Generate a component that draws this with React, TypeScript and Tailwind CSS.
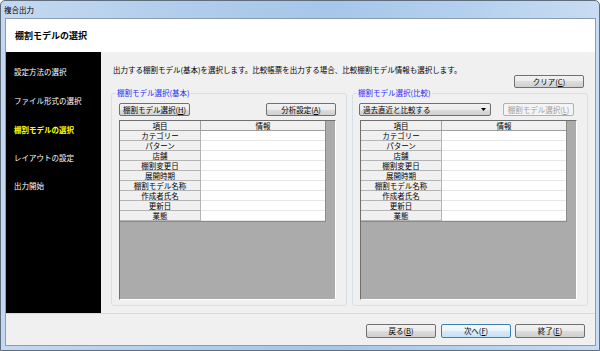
import React from "react";

const FONT = "[font-family:'Noto_Sans_CJK_JP','Noto_Sans',sans-serif]";

type BtnProps = {
  children: React.ReactNode;
  className?: string;
  focus?: boolean;
  disabled?: boolean;
};

function Btn({ children, className = "", focus, disabled }: BtnProps) {
  const look = disabled
    ? "border-[#adb2b5] bg-[#f4f4f4] text-[#a0a0a0]"
    : focus
    ? "border-[#3c7fb1] bg-[linear-gradient(#f5fafe,#e9f4fc_50%,#d6ebf9_50%,#c6e2f6)] text-black"
    : "border-[#707070] bg-[linear-gradient(#f2f2f2,#ebebeb_50%,#dddddd_50%,#cfcfcf)] text-black";
  return (
    <div
      className={`flex items-center justify-center rounded-[2px] border text-[7.5px] leading-none ${look} ${className}`}
    >
      {children}
    </div>
  );
}

const rows = [
  "カテゴリー",
  "パターン",
  "店舗",
  "棚割変更日",
  "展開時期",
  "棚割モデル名称",
  "作成者氏名",
  "更新日",
  "業態",
];

function Grid() {
  return (
    <div className="mt-[4px] h-[180px] w-[217px] border-t border-l border-[#6f6f6f] border-b-white border-r-white border-b border-r bg-[#ababab]">
      <div className="w-[206px] border-r border-b border-[#8a8a8a]">
        <div className="flex h-[10px] text-[7.5px] leading-[10px] text-black">
          <div className="w-[81px] border-r border-b border-[#a0a0a0] bg-[#f0f0f0] text-center">項目</div>
          <div className="flex-1 border-b border-[#a0a0a0] bg-[#f0f0f0] text-center">情報</div>
        </div>
        {rows.map((r) => (
          <div key={r} className="flex h-[10px] text-[7.5px] leading-[10px] text-black">
            <div className="w-[81px] border-r border-b border-[#b4b4b4] bg-[#f0f0f0] text-center">{r}</div>
            <div className="flex-1 border-b border-[#e6e6e6] bg-white" />
          </div>
        ))}
      </div>
    </div>
  );
}

function Group({ label, children }: { label: string; children: React.ReactNode }) {
  return (
    <div className="relative h-[213px] w-[236px] rounded-[3px] border border-[#d5dfe5] pt-[9px] pl-[7px] pr-[9px]">
      <div className="absolute -top-[6px] left-[4px] bg-[#f0f0f0] px-[1px] text-[7.5px] leading-[10px] text-[#2a2aff]">
        {label}
      </div>
      {children}
    </div>
  );
}

export default function App() {
  const side = [
    { t: "設定方法の選択", h: "h-[29px]" },
    { t: "ファイル形式の選択", h: "h-[29px]" },
    { t: "棚割モデルの選択", h: "h-[29px]", active: true },
    { t: "レイアウトの設定", h: "h-[28px]" },
    { t: "出力開始", h: "h-[27px]" },
  ];
  return (
    <div
      className={`${FONT} flex h-[351px] w-[600px] flex-col overflow-hidden rounded-t-[5px] border border-[#5f6d7c] bg-[linear-gradient(90deg,#c4d9f1,#b1cdec_30%,#a6c6ea_55%,#b6d1ef_80%,#c8dcf2)]`}
    >
      {/* title bar */}
      <div className="flex h-[17px] items-center pl-[3px] text-[7.5px] text-black">複合出力</div>

      {/* panel */}
      <div className="ml-[4px] flex h-[328px] w-[591px] flex-col border border-[#8c9db0] bg-[#f0f0f0]">
        {/* header */}
        <div className="flex h-[33px] items-center bg-white pl-[9px] text-[9px] font-bold text-black">
          棚割モデルの選択
        </div>

        {/* middle */}
        <div className="flex h-[261px]">
          <div className="flex w-[95px] flex-col bg-black pt-[5px]">
            {side.map((s) => (
              <div
                key={s.t}
                className={`flex ${s.h} items-center pl-[8px] text-[7.5px] ${
                  s.active ? "font-bold text-[#ffff00]" : "text-white"
                }`}
              >
                {s.t}
              </div>
            ))}
          </div>

          <div className="flex flex-1 flex-col pt-[13px] pl-[10px] pr-[7px]">
            <div className="ml-[2px] h-[10px] text-[7.5px] leading-[10px] text-black">
              出力する棚割モデル(基本)を選択します。比較帳票を出力する場合、比較棚割モデル情報も選択します。
            </div>
            <div className="flex justify-end pr-[4px]">
              <Btn className="h-[13px] w-[70px]">
                クリア(<span className="underline">C</span>)
              </Btn>
            </div>
            <div className="mt-[5px] flex gap-[5px]">
              <Group label="棚割モデル選択(基本)">
                <div className="flex w-[217px] justify-between">
                  <Btn className="h-[13px] w-[71px]">
                    棚割モデル選択(<span className="underline">H</span>)
                  </Btn>
                  <Btn className="h-[13px] w-[70px]">
                    分析設定(<span className="underline">A</span>)
                  </Btn>
                </div>
                <Grid />
              </Group>
              <Group label="棚割モデル選択(比較)">
                <div className="-ml-[1px] flex w-[218px] justify-between">
                  <div className="flex h-[13px] w-[132px] items-center justify-between rounded-[2px] border border-[#707070] bg-[linear-gradient(#f2f2f2,#ebebeb_50%,#dddddd_50%,#cfcfcf)] pl-[3px] pr-[4px] text-[7.5px] leading-none text-black">
                    <span>過去直近と比較する</span>
                    <svg width="5" height="3" viewBox="0 0 5 3">
                      <path d="M0 0H5L2.5 3Z" fill="#000" />
                    </svg>
                  </div>
                  <Btn disabled className="mr-[3px] h-[13px] w-[71px]">
                    棚割モデル選択(<span className="underline">L</span>)
                  </Btn>
                </div>
                <Grid />
              </Group>
            </div>
          </div>
        </div>

        {/* footer */}
        <div className="flex h-[32px] justify-end gap-[4px] border-t border-[#d9d9d9] pt-[10px] pr-[10px]">
          <Btn className="mr-[1px] h-[14px] w-[70px]">
            戻る(<span className="underline">B</span>)
          </Btn>
          <Btn focus className="h-[14px] w-[70px]">
            次へ(<span className="underline">F</span>)
          </Btn>
          <Btn className="h-[14px] w-[70px]">
            終了(<span className="underline">E</span>)
          </Btn>
        </div>
      </div>
    </div>
  );
}
